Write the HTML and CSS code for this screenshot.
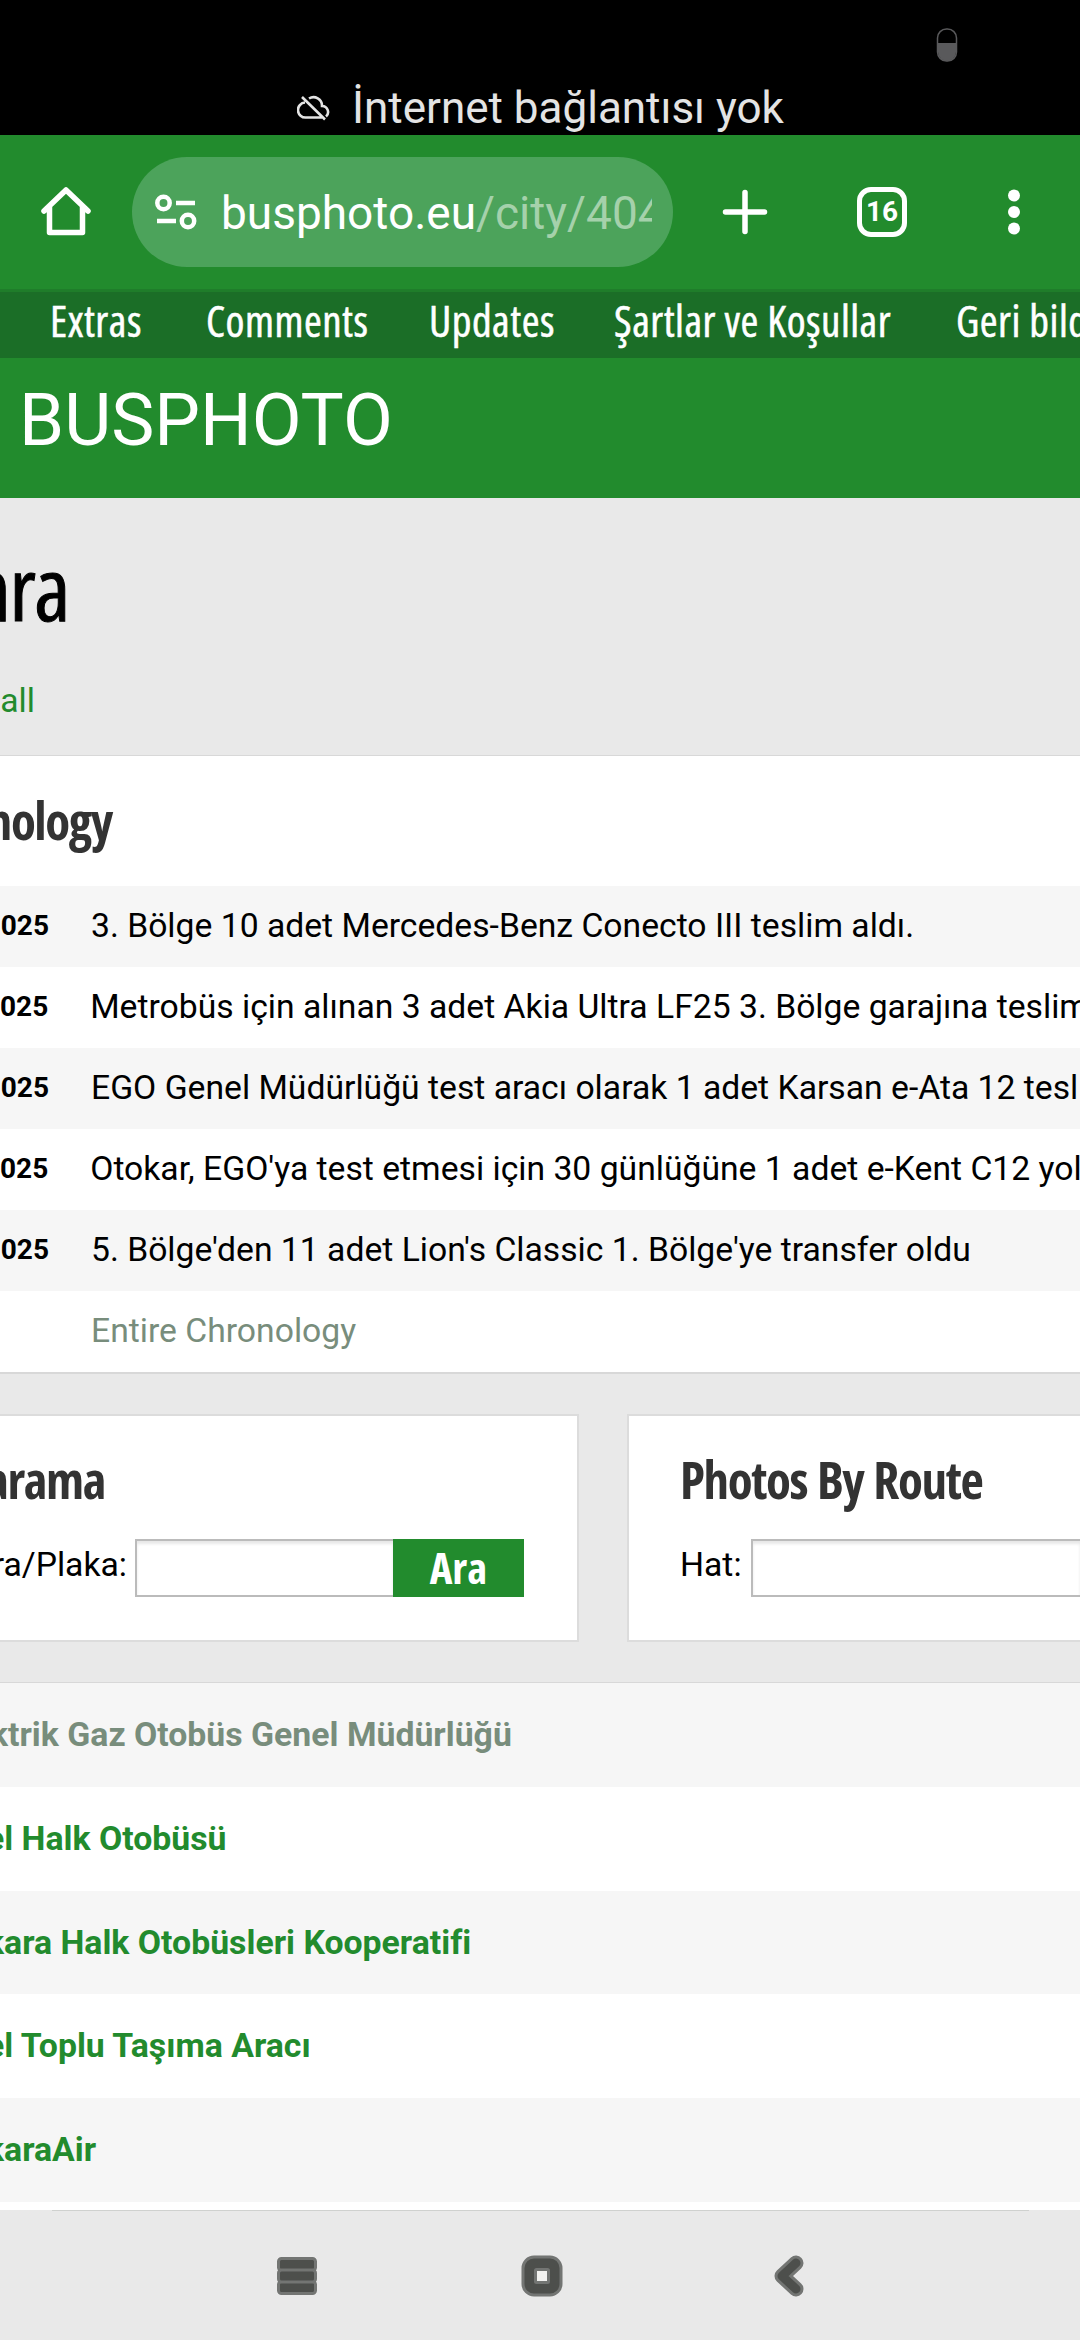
FILE: index.html
```html
<!DOCTYPE html>
<html lang="tr">
<head>
  <meta charset="UTF-8">
  <title>BUSPHOTO</title>
  <link rel="stylesheet" href="styles.css">
</head>
<body>

  <div class="status-bar">
    <div class="status-top">
      <svg class="battery" width="22" height="34" viewBox="0 0 22 34">
        <rect x="1.5" y="1" width="19" height="32" rx="9" fill="#000" stroke="#59595b" stroke-width="1.5"/>
        <path d="M2 15h18v9a9 9 0 0 1-18 0z" fill="#59595b"/>
      </svg>
    </div>
    <div class="status-message">
      <svg class="cloud" width="34" height="28" viewBox="0 0 34 28" fill="none" stroke="#e4e4e4" stroke-width="2.6">
        <path d="M8 8.500a7.500 7.500 0 0 0 1 15h16M12 4.500a8.500 8.500 0 0 1 13 7.500a6 6 0 0 1 4 10.500M5 3l23 22.500"/>
      </svg>
      <span>İnternet bağlantısı yok</span>
    </div>
  </div>

  <div class="toolbar">
    <svg class="home" width="52" height="52" viewBox="0 0 52 52" fill="none" stroke="#fff" stroke-width="5.500" stroke-linejoin="round" stroke-linecap="round">
      <path d="M4 25L26 4L48 25M9.500 21v25.500h33v-25.500"/>
    </svg>
    <div class="address">
      <svg class="tune" width="42" height="36" viewBox="0 0 42 36" fill="none" stroke="#fff" stroke-width="4.500">
        <circle cx="8.500" cy="9" r="6.200"/>
        <circle cx="33" cy="27" r="6.200"/>
        <path d="M21 9h19M2 27h19"/>
      </svg>
      <span class="url">busphoto.eu<span class="path">/city/404</span></span>
    </div>
    <svg class="plus" width="46" height="46" viewBox="0 0 46 46" stroke="#fff" stroke-width="5.500" stroke-linecap="round">
      <path d="M23 3.500v39M3.500 23h39"/>
    </svg>
    <span class="tabs">16</span>
    <svg class="more" width="14" height="48" viewBox="0 0 14 48" fill="#fff">
      <circle cx="7" cy="7.500" r="6"/>
      <circle cx="7" cy="24" r="6"/>
      <circle cx="7" cy="40.500" r="6"/>
    </svg>
  </div>

  <nav class="site-nav">
    <a class="narrow">Extras</a>
    <a class="narrow">Comments</a>
    <a class="narrow">Updates</a>
    <a class="narrow">Şartlar ve Koşullar</a>
    <a class="narrow">Geri bild</a>
  </nav>
  <header class="site-header">BUSPHOTO</header>

  <main>
    <h1><span class="narrow">ara</span></h1>
    <p class="show-all"><span>all</span></p>

    <section class="chronology">
      <h2><span class="narrow">nology</span></h2>
      <div class="entry"><b>025</b><span>3. Bölge 10 adet Mercedes-Benz Conecto III teslim aldı.</span></div>
      <div class="entry"><b>025</b><span>Metrobüs için alınan 3 adet Akia Ultra LF25 3. Bölge garajına teslim</span></div>
      <div class="entry"><b>025</b><span>EGO Genel Müdürlüğü test aracı olarak 1 adet Karsan e-Ata 12 tesl</span></div>
      <div class="entry"><b>025</b><span>Otokar, EGO'ya test etmesi için 30 günlüğüne 1 adet e-Kent C12 yol</span></div>
      <div class="entry"><b>025</b><span>5. Bölge'den 11 adet Lion's Classic 1. Bölge'ye transfer oldu</span></div>
      <div class="entry"><b></b><span class="visited">Entire Chronology</span></div>
    </section>

    <div class="searches">
      <section class="card search">
        <h2><span class="narrow">arama</span></h2>
        <div class="field">
          <label>ra/Plaka:</label>
          <div class="input"></div>
          <div class="button"><span class="narrow">Ara</span></div>
        </div>
      </section>
      <section class="card route">
        <h2><span class="narrow">Photos By Route</span></h2>
        <div class="field">
          <label>Hat:</label>
          <div class="input"></div>
        </div>
      </section>
    </div>

    <section class="operators">
      <div class="operator visited">ktrik Gaz Otobüs Genel Müdürlüğü</div>
      <div class="operator">el Halk Otobüsü</div>
      <div class="operator">kara Halk Otobüsleri Kooperatifi</div>
      <div class="operator">el Toplu Taşıma Aracı</div>
      <div class="operator">karaAir</div>
    </section>
  </main>

  <div class="divider"></div>
  <div class="nav-bar">
    <svg class="recents" width="40" height="38" viewBox="0 0 40 38" fill="#4d4f4c" stroke="#737573" stroke-width="3">
      <rect x="1.500" y="1.500" width="37" height="12" rx="3"/>
      <rect x="1.500" y="24.500" width="37" height="12" rx="3"/>
      <rect x="1.500" y="13" width="37" height="12" rx="3"/>
    </svg>
    <svg class="home-key" width="42" height="42" viewBox="0 0 42 42" stroke="#737573" stroke-width="3">
      <rect x="2" y="2" width="38" height="38" rx="11" fill="#4d4f4c"/>
      <rect x="14.500" y="14.500" width="13" height="13" rx="1" fill="#f2f2f0"/>
    </svg>
    <svg class="back" width="30" height="42" viewBox="0 0 30 42" fill="none" stroke-linecap="round" stroke-linejoin="round">
      <path d="M22 8L8 21l14 13" stroke="#737573" stroke-width="15"/>
      <path d="M22 8L8 21l14 13" stroke="#4d4f4c" stroke-width="9"/>
    </svg>
  </div>

</body>
</html>
```
FILE: styles.css
```css
* {
  box-sizing: border-box;
}

body {
  margin: 0;
  width: 1080px;
  height: 2340px;
  overflow: hidden;
  background-color: #e9e9e9;
  color: #000;
  font-family: Roboto, sans-serif;
  font-size: 33.7px;
  white-space: nowrap;
}

h1, h2, p {
  margin: 0;
}

svg {
  display: block;
  flex: none;
}

.narrow {
  font-family: "Open Sans", sans-serif;
  font-stretch: 75%;
}

.status-bar {
  height: 135px;
  background-color: #000;
  color: #e4e4e4;
}

.status-top {
  height: 80px;
  padding: 28px 0 0 936px;
}

.status-message {
  display: flex;
  align-items: center;
  height: 55px;
  padding-left: 297px;
  font-size: 44px;
}

.cloud {
  margin-right: 21px;
}

.toolbar {
  display: flex;
  align-items: center;
  height: 154px;
  padding-left: 40px;
  background-color: #228b2d;
}

.address {
  display: flex;
  align-items: center;
  width: 541px;
  height: 110px;
  margin: 0 49px 0 40px;
  padding-left: 23px;
  border-radius: 55px;
  background-color: #4ca35b;
}

.url {
  width: 431px;
  margin-left: 24px;
  padding-top: 2px;
  overflow: hidden;
  color: #fff;
  font-size: 46px;
}

.path {
  color: #a5d1ab;
}

.tabs {
  width: 50px;
  height: 50px;
  margin: 0 100px 0 89px;
  border: 5.5px solid #fff;
  border-radius: 14px;
  color: #fff;
  font-size: 28px;
  font-weight: bold;
  line-height: 40px;
  text-align: center;
}

.site-nav {
  display: grid;
  grid-template-columns: 156px 223px 185px 342px auto;
  height: 69px;
  padding-left: 50px;
  overflow: hidden;
  border-top: 3px solid #1f7d2a;
  background-color: #1b6e27;
  color: #fff;
  font-size: 43px;
  letter-spacing: 0.5px;
  line-height: 57px;
  -webkit-text-stroke: 0.5px #fff;
}

.site-header {
  height: 140px;
  padding-left: 19px;
  background-color: #228b2d;
  color: #fff;
  font-size: 72.5px;
  line-height: 126px;
}

h1 {
  display: flex;
  justify-content: flex-end;
  width: 69px;
  height: 160px;
  font-size: 88px;
  font-weight: normal;
  letter-spacing: -1.5px;
  line-height: 178px;
  -webkit-text-stroke: 1px #000;
}

.show-all {
  display: flex;
  justify-content: flex-end;
  width: 35px;
  height: 97px;
  color: #228b2d;
  line-height: 86px;
}

.chronology {
  height: 619px;
  border-top: 1px solid #d8d8d8;
  border-bottom: 2px solid #d8d8d8;
  background-color: #fff;
}

h2 {
  color: #333;
  font-size: 51px;
  font-weight: bold;
  letter-spacing: -1.4px;
  word-spacing: 2px;
}

.chronology h2 {
  display: flex;
  justify-content: flex-end;
  width: 112px;
  height: 130px;
  line-height: 128px;
}

.entry {
  display: flex;
  height: 81.1px;
  line-height: 79px;
}

.entry:nth-child(even) {
  background-color: #f6f6f6;
}

.entry b {
  display: flex;
  justify-content: flex-end;
  width: 49px;
  margin-right: 42px;
  font-size: 28px;
  line-height: 80px;
}

.visited {
  color: #788d7c;
}

.searches {
  display: flex;
  gap: 48px;
  margin: 40px 0;
}

.card {
  height: 228px;
  border: 2px solid #dcdcdc;
  background-color: #fff;
}

.search {
  width: 579px;
  border-left: 0;
}

.route {
  width: 453px;
  padding-left: 51px;
  border-right: 0;
}

.card h2 {
  height: 123px;
  line-height: 127px;
}

.search h2 {
  display: flex;
  justify-content: flex-end;
  width: 105px;
}

.field {
  display: flex;
  height: 58px;
  line-height: 51px;
}

.search label {
  display: flex;
  justify-content: flex-end;
  width: 127px;
}

.input {
  width: 258px;
  margin-left: 8px;
  border: 2px solid #bbb;
  border-right: 0;
  box-shadow: inset 0 3px 3px #e8e8e8;
}

.route .input {
  flex: 1;
  margin-left: 9px;
}

.button {
  width: 131px;
  background-color: #228b2d;
  color: #fff;
  font-size: 43px;
  font-weight: bold;
  line-height: 58px;
  text-align: center;
}

.operators {
  height: 528px;
  border-top: 1px solid #d8d8d8;
  background-color: #fff;
}

.operator {
  height: 103.8px;
  color: #228b2d;
  font-size: 33.8px;
  font-weight: bold;
  line-height: 103px;
  text-indent: -14px;
}

.operator:nth-child(odd) {
  background-color: #f6f6f6;
}

.operator.visited {
  color: #788d7c;
  text-indent: -10px;
}

.divider {
  height: 1px;
  margin: 0 51px 0 52px;
  background-color: #cfd1cf;
}

.nav-bar {
  display: flex;
  align-items: center;
  height: 129px;
  padding-left: 277px;
  background-color: #e9e9e9;
}

.home-key {
  margin: 0 211px 0 204px;
}
```
